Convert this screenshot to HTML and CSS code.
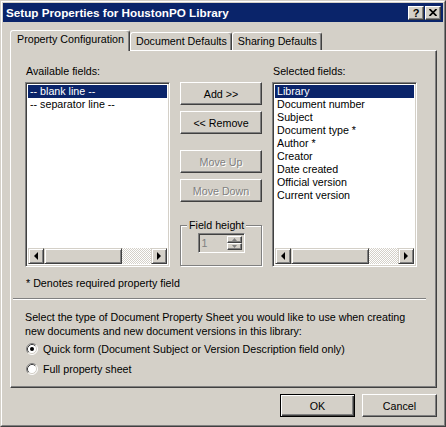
FILE: index.html
```html
<!DOCTYPE html>
<html>
<head>
<meta charset="utf-8">
<title>Setup Properties</title>
<link rel="stylesheet" href="styles.css">
</head>
<body>
<div class="window">
  <div class="frame">
    <div class="titlebar">
      <span class="title">Setup Properties for HoustonPO Library</span>
      <div class="tb-buttons">
        <span class="tb-btn help">?</span>
        <span class="tb-btn close"><svg width="8" height="7" viewBox="0 0 8 7"><path d="M0.5 0 L7.5 7 M7.5 0 L0.5 7" stroke="#000" stroke-width="1.7"/></svg></span>
      </div>
    </div>
    <div class="body">
      <div class="tabs">
        <div class="tab active">Property Configuration</div>
        <div class="tab">Document Defaults</div>
        <div class="tab">Sharing Defaults</div>
      </div>
      <div class="panel">
        <div class="fields">
          <div class="label">Available fields:</div>
          <div class="label right">Selected fields:</div>
          <div class="listbox left">
            <ul class="items">
              <li class="sel">-- blank line --</li>
              <li>-- separator line --</li>
            </ul>
            <div class="hscroll">
              <span class="sbtn"><svg width="8" height="8" viewBox="0 0 8 8"><polygon points="2,4 6,0 6,8" fill="#000"/></svg></span>
              <span class="thumb"></span>
              <span class="track"></span>
              <span class="sbtn"><svg width="8" height="8" viewBox="0 0 8 8"><polygon points="6,4 2,0 2,8" fill="#000"/></svg></span>
            </div>
          </div>
          <div class="mid">
            <button class="btn wide add">Add &gt;&gt;</button>
            <button class="btn wide remove">&lt;&lt; Remove</button>
            <button class="btn wide disabled up">Move Up</button>
            <button class="btn wide disabled down">Move Down</button>
            <div class="group">
              <span class="group-label">Field height</span>
              <div class="spin">
                <span class="spin-val">1</span>
                <span class="spin-btns">
                  <span class="sb"><svg width="5" height="3" viewBox="0 0 5 3"><polygon points="2.5,0 5,3 0,3" fill="#808080"/></svg></span>
                  <span class="sb"><svg width="5" height="3" viewBox="0 0 5 3"><polygon points="0,0 5,0 2.5,3" fill="#808080"/></svg></span>
                </span>
              </div>
            </div>
          </div>
          <div class="listbox rightlist">
            <ul class="items">
              <li class="sel">Library</li>
              <li>Document number</li>
              <li>Subject</li>
              <li>Document type *</li>
              <li>Author *</li>
              <li>Creator</li>
              <li>Date created</li>
              <li>Official version</li>
              <li>Current version</li>
            </ul>
            <div class="hscroll">
              <span class="sbtn"><svg width="8" height="8" viewBox="0 0 8 8"><polygon points="2,4 6,0 6,8" fill="#000"/></svg></span>
              <span class="thumb"></span>
              <span class="track"></span>
              <span class="sbtn"><svg width="8" height="8" viewBox="0 0 8 8"><polygon points="6,4 2,0 2,8" fill="#000"/></svg></span>
            </div>
          </div>
        </div>
        <div class="note">* Denotes required property field</div>
        <div class="sep"></div>
        <p class="desc">Select the type of Document Property Sheet you would like to use when creating<br>new documents and new document versions in this library:</p>
        <div class="radios">
          <label class="radio">
            <svg width="12" height="12" viewBox="0 0 12 12">
              <circle cx="6" cy="6" r="5" fill="#fff"/>
              <path d="M2.11 9.89 A5.5 5.5 0 0 1 9.89 2.11" fill="none" stroke="#808080"/>
              <path d="M9.89 2.11 A5.5 5.5 0 0 1 2.11 9.89" fill="none" stroke="#fff"/>
              <path d="M2.82 9.18 A4.5 4.5 0 0 1 9.18 2.82" fill="none" stroke="#404040"/>
              <path d="M9.18 2.82 A4.5 4.5 0 0 1 2.82 9.18" fill="none" stroke="#d4d0c8"/>
              <circle cx="6" cy="6" r="2" fill="#000"/>
            </svg>
            <span>Quick form (Document Subject or Version Description field only)</span>
          </label>
          <label class="radio">
            <svg width="12" height="12" viewBox="0 0 12 12">
              <circle cx="6" cy="6" r="5" fill="#fff"/>
              <path d="M2.11 9.89 A5.5 5.5 0 0 1 9.89 2.11" fill="none" stroke="#808080"/>
              <path d="M9.89 2.11 A5.5 5.5 0 0 1 2.11 9.89" fill="none" stroke="#fff"/>
              <path d="M2.82 9.18 A4.5 4.5 0 0 1 9.18 2.82" fill="none" stroke="#404040"/>
              <path d="M9.18 2.82 A4.5 4.5 0 0 1 2.82 9.18" fill="none" stroke="#d4d0c8"/>
            </svg>
            <span>Full property sheet</span>
          </label>
        </div>
      </div>
      <div class="actions">
        <button class="btn dlg default">OK</button>
        <button class="btn dlg">Cancel</button>
      </div>
    </div>
  </div>
</div>
</body>
</html>
```

FILE: styles.css
```css
* { box-sizing: border-box; }
html, body { margin: 0; padding: 0; }
body {
  width: 446px;
  height: 427px;
  overflow: hidden;
  background: #d4d0c8;
  font-family: "Liberation Sans", Arial, sans-serif;
  font-size: 10.7px;
  color: #000;
}
.window {
  width: 446px;
  height: 427px;
  border: 1px solid;
  border-color: #d4d0c8 #404040 #404040 #d4d0c8;
  background: #d4d0c8;
}
.frame {
  height: 100%;
  border: 1px solid;
  border-color: #fff #808080 #808080 #fff;
  padding: 1px;
  display: flex;
  flex-direction: column;
}
.titlebar {
  height: 19px;
  flex: 0 0 auto;
  background: #0a246a;
  display: flex;
  align-items: center;
  justify-content: space-between;
  padding: 0 2px 0 3px;
}
.title {
  color: #fff;
  font-weight: bold;
  font-size: 11.7px;
}
.tb-buttons { display: flex; gap: 1px; }
.tb-btn {
  width: 16px;
  height: 14px;
  background: #d4d0c8;
  border: 1px solid;
  border-color: #fff #404040 #404040 #fff;
  box-shadow: inset -1px -1px 0 #808080;
  display: flex;
  align-items: center;
  justify-content: center;
  font-weight: bold;
  font-size: 11px;
  line-height: 12px;
}
.body {
  flex: 1;
  display: flex;
  flex-direction: column;
  padding: 8px 6px 0 7px;
}
.tabs {
  display: flex;
  align-items: flex-end;
  height: 20px;
}
.tab {
  height: 18px;
  padding: 0 4px 0 5px;
  border: 1px solid;
  border-bottom: 0;
  border-color: #fff #404040 transparent #fff;
  box-shadow: inset -1px 0 0 #808080;
  border-radius: 3px 3px 0 0;
  line-height: 17px;
  background: #d4d0c8;
  white-space: nowrap;
}
.tab.active {
  height: 21px;
  margin-bottom: -1px;
  padding: 0 5px 0 6px;
  line-height: 16px;
  position: relative;
  z-index: 1;
}
.panel {
  height: 338px;
  flex: 0 0 auto;
  border: 1px solid;
  border-color: #fff #404040 #404040 #fff;
  box-shadow: inset -1px -1px 0 #808080;
  display: flex;
  flex-direction: column;
}
.fields {
  margin: 14px 18px 0 14px;
  display: grid;
  grid-template-columns: 145px 82px 145px;
  grid-template-rows: 17px 185px;
  column-gap: 10px;
}
.label { grid-column: 1; grid-row: 1; line-height: 13px; padding-left: 1px; }
.label.right { grid-column: 3; }
.listbox {
  grid-row: 2;
  background: #fff;
  border: 1px solid;
  border-color: #808080 #fff #fff #808080;
  box-shadow: inset 1px 1px 0 #404040, inset -1px -1px 0 #d4d0c8;
  padding: 2px;
  display: flex;
  flex-direction: column;
}
.listbox.left { grid-column: 1; }
.listbox.rightlist { grid-column: 3; }
.items {
  list-style: none;
  margin: 0;
  padding: 0;
  flex: 1;
}
.items li {
  height: 13px;
  line-height: 13px;
  padding-left: 2px;
  white-space: nowrap;
}
.items li.sel {
  background: #0a246a;
  color: #fff;
}
.hscroll {
  height: 16px;
  display: flex;
}
.sbtn, .thumb {
  background: #d4d0c8;
  border: 1px solid;
  border-color: #d4d0c8 #404040 #404040 #d4d0c8;
  box-shadow: inset 1px 1px 0 #fff, inset -1px -1px 0 #808080;
}
.sbtn {
  width: 16px;
  display: flex;
  align-items: center;
  justify-content: center;
}
.thumb { width: 78px; }
.track {
  flex: 1;
  background: repeating-conic-gradient(#fff 0 25%, #d4d0c8 0 50%) 0 0 / 2px 2px;
}
.mid {
  grid-column: 2;
  grid-row: 2;
  display: flex;
  flex-direction: column;
}
.btn {
  font-family: "Liberation Sans", Arial, sans-serif;
  font-size: 10.7px;
  color: #000;
  background: #d4d0c8;
  border: 1px solid;
  border-color: #fff #404040 #404040 #fff;
  box-shadow: inset -1px -1px 0 #808080;
  padding: 0;
  margin: 0;
  height: 23px;
}
.btn.wide { width: 82px; }
.btn.remove { margin-top: 6px; }
.btn.up { margin-top: 16px; }
.btn.down { margin-top: 6px; }
.btn.disabled {
  color: #808080;
  text-shadow: 1px 1px 0 #fff;
}
.group {
  margin-top: 23px;
  height: 41px;
  border: 1px solid #808080;
  box-shadow: 1px 1px 0 #fff, inset 1px 1px 0 #fff;
  display: flex;
  flex-direction: column;
  align-items: center;
}
.group-label {
  margin-top: -7px;
  margin-left: 6px;
  align-self: flex-start;
  background: #d4d0c8;
  padding: 0 2px;
  line-height: 13px;
}
.spin {
  margin-top: 1px;
  width: 47px;
  height: 20px;
  border: 1px solid;
  border-color: #808080 #fff #fff #808080;
  box-shadow: inset 1px 1px 0 #404040, inset -1px -1px 0 #d4d0c8;
  padding: 2px;
  display: flex;
}
.spin-val {
  flex: 1;
  color: #808080;
  line-height: 14px;
  padding-left: 1px;
}
.spin-btns {
  width: 15px;
  display: flex;
  flex-direction: column;
}
.sb {
  flex: 1;
  border: 1px solid;
  border-color: #fff #404040 #404040 #fff;
  box-shadow: inset -1px -1px 0 #808080;
  display: flex;
  align-items: center;
  justify-content: center;
}
.note {
  margin: 10px 0 0 15px;
  line-height: 13px;
}
.sep {
  margin: 8px 10px 0 2px;
  height: 2px;
  border-top: 1px solid #808080;
  border-bottom: 1px solid #fff;
}
.desc {
  margin: 10px 0 0 14px;
  line-height: 14px;
}
.radios {
  margin: 5px 0 0 15px;
  display: flex;
  flex-direction: column;
  gap: 8px;
}
.radio {
  display: flex;
  align-items: center;
  gap: 5px;
  height: 12px;
  line-height: 13px;
}
.actions {
  margin-top: 6px;
  display: flex;
  justify-content: flex-end;
  gap: 7px;
}
.btn.dlg { width: 75px; }
.btn.default {
  border: 1px solid #000;
  box-shadow: inset 1px 1px 0 #fff, inset -1px -1px 0 #404040, inset -2px -2px 0 #808080;
}
```
